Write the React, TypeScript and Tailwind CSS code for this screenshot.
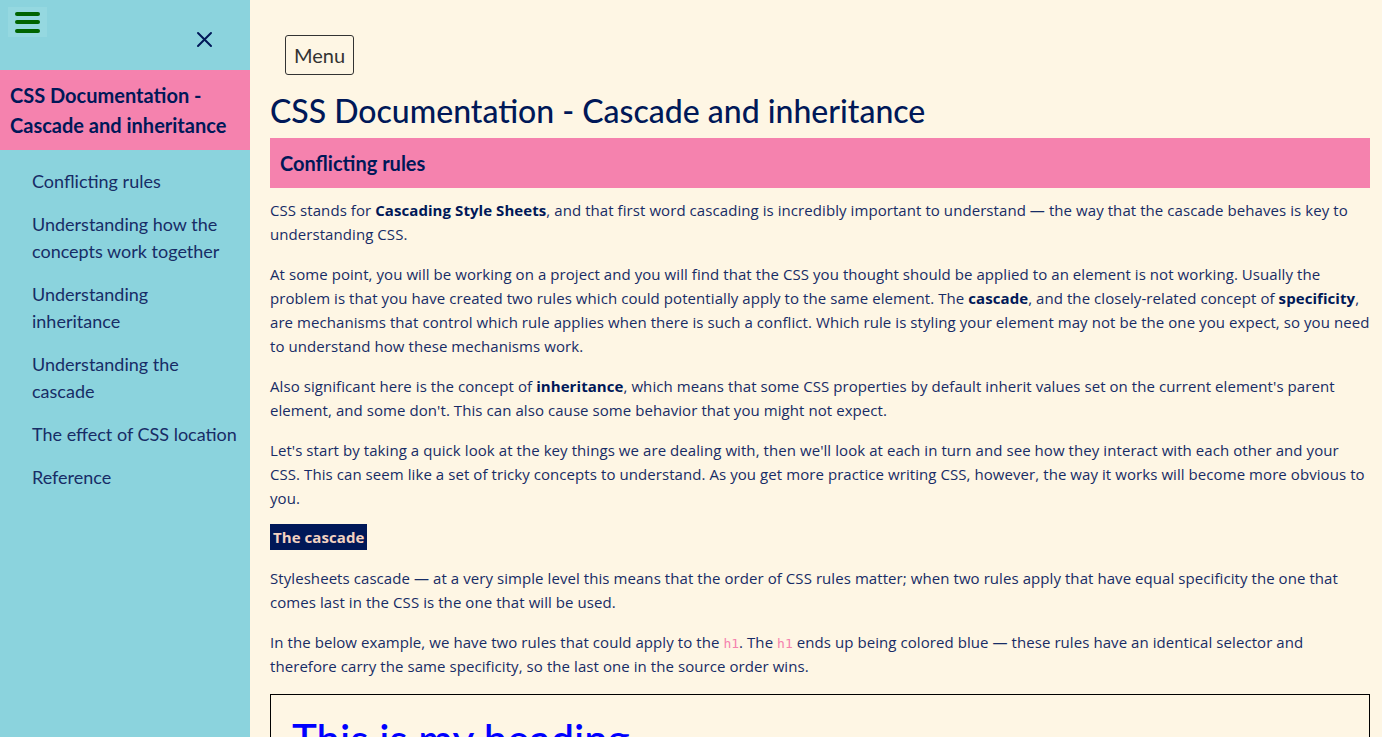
import React from "react";

const nav = [
  "Conflicting rules",
  "Understanding how the concepts work together",
  "Understanding inheritance",
  "Understanding the cascade",
  "The effect of CSS location",
  "Reference",
];

function Code({ children }: { children: React.ReactNode }) {
  return (
    <code className="text-[13px] leading-[0] tracking-normal text-[#f582ae] [font-family:'DejaVu_Sans_Mono',monospace]">
      {children}
    </code>
  );
}

export default function App() {
  return (
    <div className="flex min-h-[737px] h-[737px] overflow-hidden bg-[#fef6e4] text-[#172c66] [font-family:Lato,'Open_Sans',sans-serif]">
      <aside className="w-[250px] shrink-0 bg-[#8bd3dd] flex flex-col">
        <div className="relative h-[70px]">
          <button className="absolute left-[8px] top-[7px] w-[39px] h-[30px] bg-[#95d8e0] flex flex-col items-center justify-center gap-[4.5px]">
            <span className="block w-[25px] h-[4px] rounded-full bg-[#006400]" />
            <span className="block w-[25px] h-[4px] rounded-full bg-[#006400]" />
            <span className="block w-[25px] h-[4px] rounded-full bg-[#006400]" />
          </button>
          <svg className="absolute left-[196px] top-[31px]" width="17" height="17" viewBox="0 0 17 17">
            <path d="M2 2 L15 15 M15 2 L2 15" stroke="#001858" strokeWidth="2" strokeLinecap="round" />
          </svg>
        </div>
        <div className="bg-[#f582ae] px-[10px] py-[10px] text-[20px] leading-[30px] font-bold text-[#001858]">
          CSS Documentation - Cascade and inheritance
        </div>
        <ul className="mt-[18px] pl-[32px] pr-[10px] flex flex-col gap-[16px]">
          {nav.map((n) => (
            <li key={n} className="text-[18px] leading-[27px] text-[#172c66]">
              {n}
            </li>
          ))}
        </ul>
      </aside>
      <main className="flex-1 pl-[20px] pr-[12px] pt-[35px]">
        <button className="ml-[15px] h-[40px] px-[8px] border border-[#333] rounded-[3px] text-[20px] text-[#333] leading-[38px]">
          Menu
        </button>
        <h1 className="mt-[17px] text-[32px] leading-[38px] font-medium text-[#001858]">
          CSS Documentation - Cascade and inheritance
        </h1>
        <h2 className="mt-[8px] h-[50px] bg-[#f582ae] px-[10px] flex items-center text-[20px] font-bold text-[#001858]">
          Conflicting rules
        </h2>
        <div className="mt-[10px] text-[15px] leading-[24px] tracking-[0.07px] flex flex-col gap-[16px] [font-family:'Open_Sans',sans-serif]">
          <p>
            CSS stands for <strong className="text-[#001858]">Cascading Style Sheets</strong>, and that first word cascading is incredibly important to understand — the way that the cascade behaves is key to understanding CSS.
          </p>
          <p>
            At some point, you will be working on a project and you will find that the CSS you thought should be applied to an element is not working. Usually the problem is that you have created two rules which could potentially apply to the same element. The <strong className="text-[#001858]">cascade</strong>, and the closely-related concept of <strong className="text-[#001858]">specificity</strong>, are mechanisms that control which rule applies when there is such a conflict. Which rule is styling your element may not be the one you expect, so you need to understand how these mechanisms work.
          </p>
          <p>
            Also significant here is the concept of <strong className="text-[#001858]">inheritance</strong>, which means that some CSS properties by default inherit values set on the current element's parent element, and some don't. This can also cause some behavior that you might not expect.
          </p>
          <p>
            Let's start by taking a quick look at the key things we are dealing with, then we'll look at each in turn and see how they interact with each other and your CSS. This can seem like a set of tricky concepts to understand. As you get more practice writing CSS, however, the way it works will become more obvious to you.
          </p>
          <div className="-mt-[2px] flex">
            <span className="block bg-[#001858] text-[#f3d2c1] font-bold text-[15px] leading-[26px] px-[3px]">
              The cascade
            </span>
          </div>
          <p>
            Stylesheets cascade — at a very simple level this means that the order of CSS rules matter; when two rules apply that have equal specificity the one that comes last in the CSS is the one that will be used.
          </p>
          <p>
            In the below example, we have two rules that could apply to the <Code>h1</Code>. The <Code>h1</Code> ends up being colored blue — these rules have an identical selector and therefore carry the same specificity, so the last one in the source order wins.
          </p>
          <div className="border border-black px-[21px] pt-[20px] pb-[20px] tracking-normal [font-family:Lato,sans-serif]">
            <h1 className="text-[42px] leading-[48px] text-[#0000ff] font-medium">This is my heading</h1>
          </div>
        </div>
      </main>
    </div>
  );
}
